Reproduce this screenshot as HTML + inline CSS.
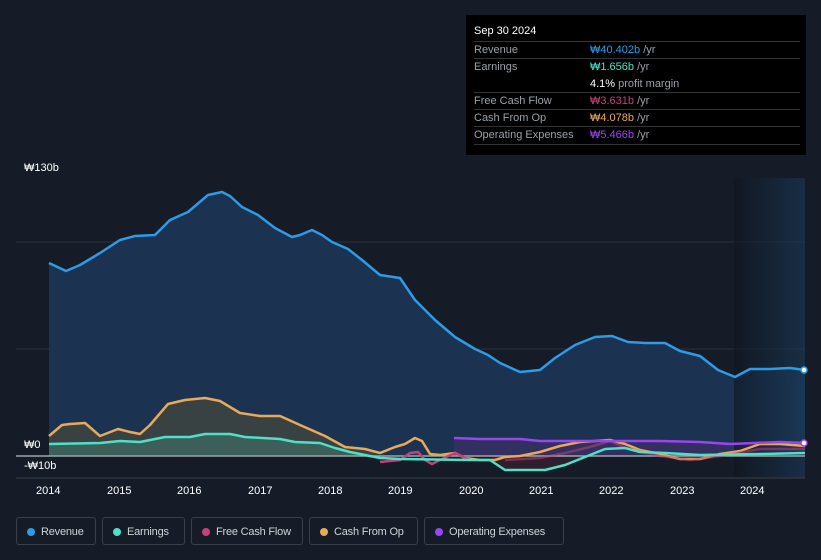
<!DOCTYPE html><html><head><meta charset="utf-8"><style>
html,body{margin:0;width:821px;height:560px;overflow:hidden}
body{background:#161c27;font-family:"Liberation Sans",sans-serif;position:relative}
.tt{position:absolute;left:466px;top:15px;width:340px;height:140px;background:#000;color:#9aa0a8;font-size:11px}
.tt .h{color:#fff;position:absolute;left:8px;top:10px;font-size:11px}
.row{position:absolute;left:8px;width:326px;border-top:1px solid #333}
.row span{position:absolute;left:116px}
.lg{position:absolute;top:517px;height:28px;border:1px solid #3a404a;border-radius:3px;color:#cfd3d8;font-size:11px;line-height:28px;box-sizing:border-box;padding-left:24px;white-space:nowrap;letter-spacing:-0.2px}
.lg i{position:absolute;left:10px;top:10px;width:8px;height:8px;border-radius:50%}
.ax{position:absolute;color:#fff;font-size:11px}
</style></head><body>
<svg width="821" height="560" style="position:absolute;left:0;top:0">
<defs><linearGradient id="f" x1="0" x2="1"><stop offset="0" stop-color="#0f1520" stop-opacity=".6"/><stop offset="1" stop-color="#1a3a58" stop-opacity=".6"/></linearGradient></defs>
<line x1="16" y1="242" x2="805" y2="242" stroke="#2a313c"/>
<line x1="16" y1="349" x2="805" y2="349" stroke="#2a313c"/>
<polygon fill="#1b3350" points="49,263 66,271 80,265 100,253 120,240 135,236 155,235 170,220 188,212 208,195 222,192 230,196 242,207 258,215 275,228 292,237 300,235 312,230 322,235 332,242 348,249 362,260 380,275 400,278 415,300 435,320 455,337 475,349 488,355 500,363 520,372 540,370 555,358 575,345 595,337 612,336 628,342 645,343 665,343 680,351 700,356 718,370 735,377 750,369 770,369 790,368 805,370 805,456 49,456"/>
<polygon fill="#3e4540" opacity=".85" points="49,436 62,425 70,424 85,423 100,436 118,429 130,432 140,434 150,425 168,404 185,400 205,398 220,401 240,413 260,416 280,416 300,425 325,436 345,447 365,449 380,456 49,456"/>
<polygon fill="#3f6660" opacity=".8" points="49,444 100,443 120,441 140,442 165,437 190,437 205,434 230,434 245,437 280,439 295,442 320,443 335,448 350,452 380,456 49,456"/>
<polygon fill="#3a2f66" opacity=".7" points="454,438 480,439 520,439 540,441 580,441 620,441 660,441 700,442 730,444 755,443 780,442 805,443 805,456 454,456"/>
<polygon fill="#3a2030" opacity=".7" points="490,456 505,470 545,470 565,465 585,457 490,456"/>
<rect x="734" y="178" width="71" height="300" fill="url(#f)"/>
<line x1="16" y1="456" x2="805" y2="456" stroke="#a0a4aa" stroke-width="1.5"/>
<line x1="16" y1="478" x2="805" y2="478" stroke="#3a404a"/>
<g fill="none" stroke-width="2.5" stroke-linejoin="round">
<polyline stroke="#e8a95a" points="49,436 62,425 70,424 85,423 100,436 118,429 130,432 140,434 150,425 168,404 185,400 205,398 220,401 240,413 260,416 280,416 300,425 325,436 345,447 365,449 380,453 395,447 405,444 415,438 422,441 430,454 440,455 455,453 465,458 480,460 495,460 505,457 520,456 540,452 560,446 580,442 610,440 625,444 640,450 660,454 680,459 700,459 720,454 740,451 760,444 780,444 805,446"/>
<polyline stroke="#c2437a" points="380,462 400,460 410,453 418,452 425,460 432,464 440,460 455,453 470,460"/>
<polyline stroke="#c2437a" opacity=".5" points="505,460 540,458 565,453 590,447 610,441 625,448 660,456 690,460 720,456 760,449 805,449"/>
<polyline stroke="#4fe0c8" points="49,444 100,443 120,441 140,442 165,437 190,437 205,434 230,434 245,437 280,439 295,442 320,443 335,448 350,452 380,458 400,459 470,460 490,460 505,470 545,470 565,465 585,457 605,449 625,448 640,452 665,453 700,455 760,454 805,453"/>
<polyline stroke="#9b45f0" points="454,438 480,439 520,439 540,441 580,441 620,441 660,441 700,442 730,444 755,443 780,442 805,443"/>
<polyline stroke="#2d9be6" points="49,263 66,271 80,265 100,253 120,240 135,236 155,235 170,220 188,212 208,195 222,192 230,196 242,207 258,215 275,228 292,237 300,235 312,230 322,235 332,242 348,249 362,260 380,275 400,278 415,300 435,320 455,337 475,349 488,355 500,363 520,372 540,370 555,358 575,345 595,337 612,336 628,342 645,343 665,343 680,351 700,356 718,370 735,377 750,369 770,369 790,368 805,370"/>
</g>
<circle cx="804" cy="370" r="3" fill="#fff" stroke="#2d9be6" stroke-width="1.5"/>
<circle cx="804" cy="443" r="3" fill="#fff" stroke="#9b45f0" stroke-width="1.5"/>
</svg>
<div class="ax" style="left:24px;top:162px">₩130b</div>
<div class="ax" style="left:24px;top:439px">₩0</div>
<div class="ax" style="left:24px;top:460px">-₩10b</div>
<div class="ax" style="left:36px;top:485px">2014</div><div class="ax" style="left:107px;top:485px">2015</div><div class="ax" style="left:177px;top:485px">2016</div><div class="ax" style="left:248px;top:485px">2017</div><div class="ax" style="left:318px;top:485px">2018</div><div class="ax" style="left:388px;top:485px">2019</div><div class="ax" style="left:459px;top:485px">2020</div><div class="ax" style="left:529px;top:485px">2021</div><div class="ax" style="left:599px;top:485px">2022</div><div class="ax" style="left:670px;top:485px">2023</div><div class="ax" style="left:740px;top:485px">2024</div>
<div class="tt"><div class="h">Sep 30 2024</div>
<div class="row" style="top:26px;height:17px;line-height:17px">Revenue<span style="color:#2d9be6">₩40.402b <b style="font-weight:normal;color:#9aa0a8">/yr</b></span></div>
<div class="row" style="top:43px;height:34px;line-height:17px">Earnings<span style="color:#4fe0c8">₩1.656b <b style="font-weight:normal;color:#9aa0a8">/yr</b><br><b style="font-weight:normal;color:#fff">4.1%</b> <b style="font-weight:normal;color:#9aa0a8">profit margin</b></span></div>
<div class="row" style="top:77px;height:17px;line-height:17px">Free Cash Flow<span style="color:#c2437a">₩3.631b <b style="font-weight:normal;color:#9aa0a8">/yr</b></span></div>
<div class="row" style="top:94px;height:17px;line-height:17px">Cash From Op<span style="color:#e8a95a">₩4.078b <b style="font-weight:normal;color:#9aa0a8">/yr</b></span></div>
<div class="row" style="top:111px;height:17px;line-height:17px;border-bottom:1px solid #333">Operating Expenses<span style="color:#9b45f0">₩5.466b <b style="font-weight:normal;color:#9aa0a8">/yr</b></span></div>
</div>
<div class="lg" style="left:16px;width:80px"><i style="background:#2d9be6"></i>Revenue</div>
<div class="lg" style="left:102px;width:83px"><i style="background:#4fe0c8"></i>Earnings</div>
<div class="lg" style="left:191px;width:112px"><i style="background:#c2437a"></i>Free Cash Flow</div>
<div class="lg" style="left:309px;width:109px"><i style="background:#e8a95a"></i>Cash From Op</div>
<div class="lg" style="left:424px;width:140px"><i style="background:#9b45f0"></i>Operating Expenses</div>
</body></html>
